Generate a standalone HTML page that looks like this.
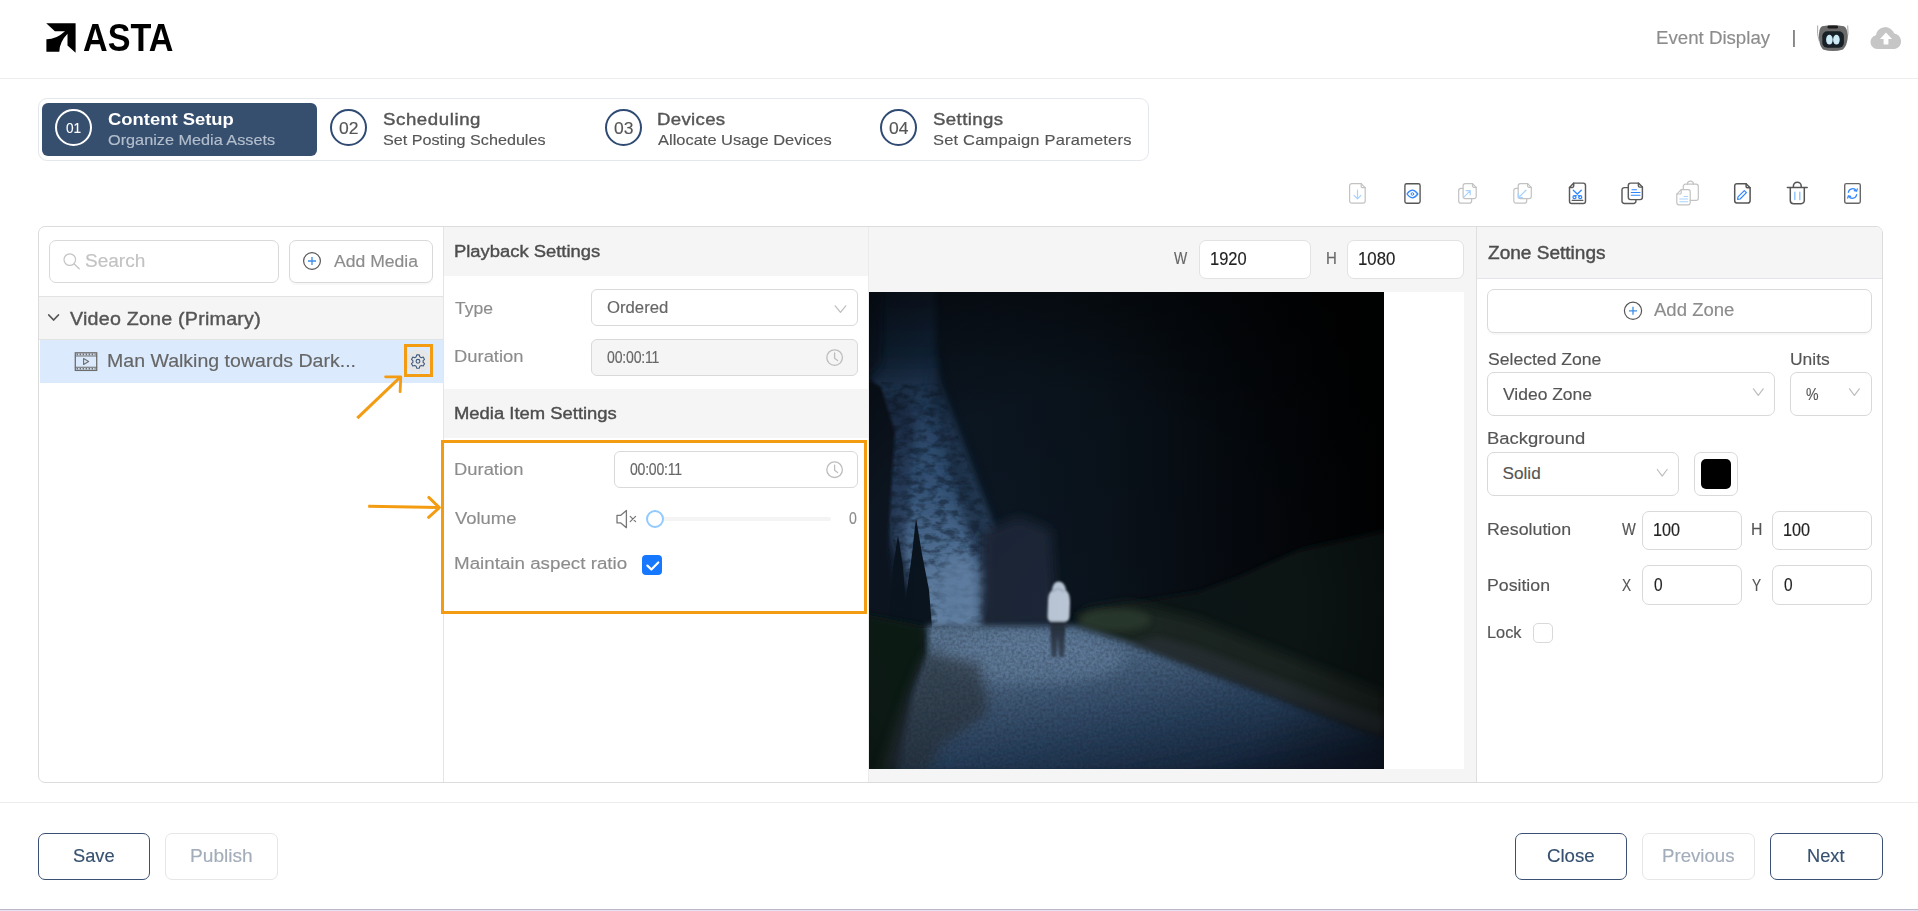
<!DOCTYPE html>
<html lang="en">
<head>
<meta charset="utf-8">
<title>ASTA - Content Setup</title>
<style>
*{box-sizing:border-box;margin:0;padding:0}
html,body{width:1918px;height:911px;overflow:hidden;background:#fff}
body{position:relative;font-family:"Liberation Sans",sans-serif;color:#555}
.a{position:absolute}
.t{position:absolute;white-space:nowrap;line-height:1;transform-origin:0 50%}
.box{position:absolute;border:1px solid #d9d9d9;border-radius:6px;background:#fff}
.hl{position:absolute;background:#ececec;height:1px}
.vl{position:absolute;background:#e4e4ec;width:1px}
svg{position:absolute;overflow:visible}
</style>
</head>
<body>
<!-- header -->
<div class="hl" style="left:0;top:78px;width:1918px;background:#ededed"></div>
<svg class="a" style="left:0;top:0" width="1918" height="100" viewBox="0 0 1918 100">
<path fill="#000" d="M46.2 23.3H75.6V52.7L67.5 45.5V33.8Q59.5 42 59.3 51.8H46.4V39.3Q56 39.5 65 31.2H54.9Z"/>
<!-- robot avatar -->
<g>
<path d="M1817.700 25.500Q1816.700 34 1819.200 41M1847.700 25.500Q1848.900 34 1846.600 41" stroke="#a8a8a8" stroke-width="1" fill="none"/>
<path d="M1822 26.200Q1833 24.200 1844 26.200Q1848 28 1847.500 38Q1847 46 1843 49.500Q1833 52.600 1823 49.500Q1819.500 46 1819 38Q1818.500 28 1822 26.200Z" fill="#6b6b6b"/>
<rect x="1827.500" y="25.600" width="10.500" height="3" rx="1.400" fill="#1c1c1c"/>
<rect x="1822.300" y="31.200" width="21.600" height="16.600" rx="5" fill="#172026"/>
<ellipse cx="1829.400" cy="39.700" rx="3.300" ry="4.900" fill="#cdeaf7"/>
<ellipse cx="1836.400" cy="39.700" rx="3.300" ry="4.900" fill="#cdeaf7"/>
</g>
<!-- cloud upload -->
<g fill="#c6c6c6">
<path d="M1877 49a7 7 0 0 1-1.2-13.8a9.5 9.5 0 0 1 18.4-1.6a7.8 7.8 0 0 1 0.6 15.4z"/>
</g>
<path d="M1886 32.5l6 6.5h-3.6v5.5h-4.8v-5.5h-3.6z" fill="#fff"/>
</svg>

<!-- stepper -->
<div class="a" style="left:38px;top:98px;width:1111px;height:63px;border:1px solid #e4e7ec;border-radius:9px"></div>
<div class="a" style="left:42px;top:103px;width:275px;height:53px;background:#374f6f;border-radius:6px"></div>
<div class="a" style="left:55px;top:109px;width:37px;height:37px;border:2px solid #fff;border-radius:50%"></div>
<div class="a" style="left:330px;top:109px;width:37px;height:37px;border:2px solid #2f4a73;border-radius:50%"></div>
<div class="a" style="left:605px;top:109px;width:37px;height:37px;border:2px solid #2f4a73;border-radius:50%"></div>
<div class="a" style="left:880px;top:109px;width:37px;height:37px;border:2px solid #2f4a73;border-radius:50%"></div>
<svg class="a" style="left:0;top:0" width="1918" height="230" viewBox="0 0 1918 230" fill="none" stroke-linecap="round" stroke-linejoin="round">
<!-- 1 download (disabled) -->
<g stroke="#c2c2c2" stroke-width="1.2">
<path d="M1351.8 183.6h9.4l4 4v13.4a2.2 2.2 0 0 1-2.2 2.2h-11.2a2.2 2.2 0 0 1-2.2-2.2v-15.2a2.2 2.2 0 0 1 2.2-2.2z"/>
<path d="M1361.2 183.6v2.8a1.2 1.2 0 0 0 1.2 1.2h2.8"/>
</g>
<path d="M1357.5 190.2v8.5M1354 195.4l3.5 3.4l3.4-3.4" stroke="#a9d3ff" stroke-width="1.2"/>
<!-- 2 preview -->
<rect x="1404.9" y="183.7" width="15.2" height="19.5" rx="1.8" stroke="#555" stroke-width="1.35"/>
<path d="M1407 194q5.3-7.6 10.8 0q-5.5 7.6-10.8 0z" stroke="#2f86ff" stroke-width="1.3"/>
<circle cx="1412.4" cy="194" r="1.3" stroke="#2f86ff" stroke-width="1"/>
<!-- 3 export (disabled) -->
<g stroke="#c2c2c2" stroke-width="1.2">
<path d="M1462.9 188.4h-2a2.2 2.2 0 0 0-2.2 2.2v10.4a2.2 2.2 0 0 0 2.2 2.2h8.5a2.2 2.2 0 0 0 2.200-2.2v-2.200"/>
<path d="M1465.300 183.600h7.200l3.700 3.700v9.200a2.200 2.200 0 0 1-2.200 2.200h-8.700a2.200 2.200 0 0 1-2.200-2.200v-10.700a2.200 2.200 0 0 1 2.200-2.200z"/>
<path d="M1472.500 183.600v2.500a1.200 1.200 0 0 0 1.200 1.200h2.500"/>
</g>
<path d="M1463.400 197.600l6.600-6.800M1466 190.600h4.200v4.200" stroke="#a9d3ff" stroke-width="1.200"/>
<!-- 4 import (disabled) -->
<g stroke="#c2c2c2" stroke-width="1.200">
<path d="M1518 188.400h-2a2.200 2.200 0 0 0-2.200 2.200v10.400a2.200 2.200 0 0 0 2.200 2.200h8.500a2.200 2.200 0 0 0 2.200-2.200v-2.200"/>
<path d="M1520.400 183.600h7.200l3.700 3.700v9.200a2.200 2.200 0 0 1-2.200 2.200h-8.700a2.200 2.200 0 0 1-2.200-2.200v-10.700a2.200 2.200 0 0 1 2.200-2.200z"/>
<path d="M1527.600 183.600v2.500a1.200 1.200 0 0 0 1.200 1.200h2.500"/>
</g>
<path d="M1526 190.200l-7.600 7.500M1518.300 193.500v4.200h4.200" stroke="#a9d3ff" stroke-width="1.200"/>
<!-- 5 cut -->
<g stroke="#5a5a5a" stroke-width="1.450">
<path d="M1573.700 183.100h9.500a2.300 2.300 0 0 1 2.300 2.300v15.800a2.300 2.300 0 0 1-2.300 2.300h-11.400a2.300 2.300 0 0 1-2.300-2.300v-13.800z"/>
<path d="M1573.700 183.100v3a1.300 1.300 0 0 1-1.300 1.300h-2.900"/>
<path d="M1572.200 200.400h10.600" stroke-width="1.300"/>
</g>
<g stroke="#2f86ff" stroke-width="1.300">
<path d="M1573.300 190.200l6.300 6M1581.300 190.200l-6.300 6"/>
<circle cx="1574.500" cy="197.200" r="1.500"/><circle cx="1580.200" cy="197.200" r="1.500"/>
</g>
<!-- 6 copy -->
<g stroke="#5a5a5a" stroke-width="1.450">
<path d="M1628.300 187.600h-4a2.300 2.300 0 0 0-2.300 2.300v11.300a2.300 2.300 0 0 0 2.300 2.300h9.300a2.300 2.300 0 0 0 2.300-2.300v-1.600"/>
<path d="M1630.600 183.100h7.800l4 4v10.200a2.300 2.300 0 0 1-2.300 2.300h-9.500a2.300 2.300 0 0 1-2.300-2.300v-11.900a2.300 2.300 0 0 1 2.300-2.300z"/>
<path d="M1638.400 183.100v2.700a1.300 1.300 0 0 0 1.300 1.300h2.700"/>
</g>
<path d="M1632 189.800h4.500M1631.200 192.500h8.800M1631.200 195.300h8.800" stroke="#2f86ff" stroke-width="1.100"/>
<!-- 7 paste (disabled) -->
<g stroke="#c2c2c2" stroke-width="1.200">
<path d="M1690.200 200.400h6a2.100 2.100 0 0 0 2.100-2.100v-12a2.100 2.100 0 0 0-2.100-2.100h-10.800a2.100 2.100 0 0 0-2.100 2.100v3.300"/>
<path d="M1687.400 184.200a3 3 0 0 1 6 0"/>
<path d="M1681.200 189.700h6.900a2.100 2.100 0 0 1 2.100 2.100v11a2.100 2.100 0 0 1-2.100 2.100h-9.200a2.100 2.100 0 0 1-2.100-2.100v-8.700z"/>
<path d="M1681.200 189.700v3a1.300 1.300 0 0 1-1.300 1.300h-3.100"/>
</g>
<path d="M1684 196.500h3.600M1679.800 199h7.800M1679.800 201.700h7.800" stroke="#a9d3ff" stroke-width="1.100"/>
<!-- 8 edit -->
<g stroke="#555" stroke-width="1.500">
<path d="M1736.900 183.700h9.200l4 4v13.100a2.200 2.200 0 0 1-2.200 2.200h-11a2.200 2.200 0 0 1-2.200-2.200v-14.900a2.200 2.200 0 0 1 2.200-2.200z"/>
<path d="M1746.100 183.700v2.800a1.200 1.200 0 0 0 1.200 1.200h2.800"/>
</g>
<path d="M1744.300 190.600l2.100 2.100l-6.300 6.300l-2.500.5l.4-2.600z" stroke="#2f86ff" stroke-width="1.200"/>
<!-- 9 delete -->
<g stroke="#555" stroke-width="1.500">
<path d="M1787.400 187.500h19.800"/>
<path d="M1793.400 187.300v-1.200a3.900 3.900 0 0 1 7.800 0v1.200"/>
<path d="M1790.300 187.700v12.800a3.200 3.200 0 0 0 3.200 3.200h7.600a3.200 3.200 0 0 0 3.200-3.200v-12.800"/>
</g>
<path d="M1794.800 192.200v7.400M1799.800 192.200v7.400" stroke="#8cc4ff" stroke-width="1.400"/>
<!-- 10 refresh -->
<rect x="1844.700" y="183.600" width="15.600" height="19.600" rx="1.600" stroke="#666" stroke-width="1.400"/>
<g stroke="#2f86ff" stroke-width="1.200">
<path d="M1848.300 192.300a4.400 4.400 0 0 1 8-1.600M1856.700 194.700a4.400 4.400 0 0 1-8 1.600"/>
<path d="M1857.300 188.800l-.6 2.400l-2.400-.5M1847.700 198.200l.6-2.400l2.400.5"/>
</g>
</svg>

<!-- main panel -->
<div class="a" style="left:38px;top:226px;width:1845px;height:557px;border:1px solid #dcdcdc;border-radius:7px;overflow:hidden;background:#fff">
  <!-- coordinates inside are page coords minus (39,227) -->
  <div class="a" style="left:405px;top:0;width:425px;height:49px;background:#f5f5f5"></div>
  <div class="a" style="left:405px;top:162px;width:425px;height:49px;background:#f5f5f5"></div>
  <div class="a" style="left:830px;top:0;width:607px;height:555px;background:#f5f5f5"></div>
  <div class="a" style="left:1438px;top:0;width:405px;height:51px;background:#f5f5f5"></div>
  <div class="a" style="left:0;top:69px;width:404px;height:44px;background:#f5f5f5;border-top:1px solid #e2e2e2;border-bottom:1px solid #e2e2e2"></div>
  <div class="a" style="left:1px;top:113px;width:403px;height:43px;background:#dbeafc"></div>
</div>
<div class="vl" style="left:443px;top:227px;height:555px"></div>
<div class="vl" style="left:868px;top:227px;height:555px;background:#ebebeb"></div>
<div class="vl" style="left:1476px;top:227px;height:555px;background:#dfdfdf"></div>
<div class="hl" style="left:1477px;top:278px;width:405px;background:#e4e4ec"></div>
<!-- left column controls -->
<div class="box" style="left:49px;top:240px;width:230px;height:43px;border-radius:7px"></div>
<div class="box" style="left:289px;top:240px;width:144px;height:43px;border-radius:7px;box-shadow:0 2px 1px rgba(0,0,0,.03)"></div>
<!-- middle controls -->
<div class="box" style="left:591px;top:289px;width:267px;height:37px"></div>
<div class="box" style="left:591px;top:339px;width:267px;height:37px;background:#f5f5f5"></div>
<div class="box" style="left:614px;top:451px;width:244px;height:37px"></div>
<div class="a" style="left:655px;top:517px;width:176px;height:4px;border-radius:2px;background:#f4f4f4"></div>
<div class="a" style="left:646px;top:510px;width:18px;height:18px;border-radius:50%;border:2.5px solid #91caff;background:#fff"></div>
<div class="a" style="left:642px;top:555px;width:20px;height:20px;border-radius:4px;background:#1677ff"></div>
<!-- orange highlight boxes -->
<div class="a" style="left:441px;top:440px;width:426px;height:174px;border:3px solid #f39c12"></div>
<div class="a" style="left:406px;top:349px;width:24px;height:24px;border-radius:12px;background:#e6e6e6"></div>
<div class="a" style="left:404px;top:344px;width:29px;height:33px;border:3px solid #f39c12"></div>
<!-- canvas -->
<div class="box" style="left:1199px;top:240px;width:112px;height:39px;border-color:#e2e2e2;border-radius:7px"></div>
<div class="box" style="left:1347px;top:240px;width:117px;height:39px;border-color:#e2e2e2;border-radius:7px"></div>
<div class="a" style="left:869px;top:292px;width:595px;height:477px;background:#fff"></div>
<svg class="a" style="left:869px;top:292px" width="515" height="477" viewBox="0 0 515 477">
<defs>
<filter id="b1" x="-20%" y="-20%" width="140%" height="140%"><feGaussianBlur stdDeviation="0.800"/></filter>
<filter id="b3" x="-20%" y="-20%" width="140%" height="140%"><feGaussianBlur stdDeviation="3"/></filter>
<filter id="b6" x="-20%" y="-20%" width="140%" height="140%"><feGaussianBlur stdDeviation="6"/></filter>
<filter id="b12" x="-30%" y="-30%" width="160%" height="160%"><feGaussianBlur stdDeviation="14"/></filter>
<filter id="noise" x="0" y="0" width="100%" height="100%">
<feTurbulence type="fractalNoise" baseFrequency="0.35" numOctaves="2" seed="7" result="n"/>
<feColorMatrix in="n" type="matrix" values="0 0 0 0 0  0 0 0 0 0  0 0 0 0 0  0 0 0 -1.600 1.050" result="a"/>
<feComposite in="SourceGraphic" in2="a" operator="in"/>
</filter>
<filter id="noise2" x="0" y="0" width="100%" height="100%">
<feTurbulence type="fractalNoise" baseFrequency="0.09 0.16" numOctaves="3" seed="3" result="n"/>
<feColorMatrix in="n" type="matrix" values="0 0 0 0 0  0 0 0 0 0  0 0 0 0 0  0 0 0 -3.200 1.900" result="a"/>
<feComposite in="SourceGraphic" in2="a" operator="in"/>
</filter>
<linearGradient id="gsky" x1="0" y1="0" x2="0" y2="1">
<stop offset="0" stop-color="#13253b"/><stop offset=".2" stop-color="#19314e"/><stop offset=".3" stop-color="#29466a"/><stop offset=".6" stop-color="#395a80"/><stop offset=".82" stop-color="#5a7aa0"/><stop offset="1" stop-color="#6c8bad"/>
</linearGradient>
<linearGradient id="groad" x1=".1" y1="0" x2=".75" y2="1">
<stop offset="0" stop-color="#627d9b"/><stop offset=".3" stop-color="#4f6986"/><stop offset=".65" stop-color="#2c4563"/><stop offset="1" stop-color="#14243c"/>
</linearGradient>
<radialGradient id="gvig" cx=".4" cy=".66" r=".8">
<stop offset="0" stop-color="#000" stop-opacity="0"/><stop offset=".55" stop-color="#000" stop-opacity=".1"/><stop offset="1" stop-color="#000" stop-opacity=".72"/>
</radialGradient>
<linearGradient id="gforest" x1="0" y1="0" x2="1" y2="0">
<stop offset="0" stop-color="#0f1c2b"/><stop offset=".45" stop-color="#0a131c"/><stop offset=".8" stop-color="#04070b"/><stop offset="1" stop-color="#010203"/>
</linearGradient>
<linearGradient id="glegs" x1="0" y1="0" x2="0" y2="1"><stop offset="0" stop-color="#232c38"/><stop offset="1" stop-color="#39475a"/></linearGradient>
<clipPath id="cimg"><rect width="515" height="477"/></clipPath>
</defs>
<g clip-path="url(#cimg)">
<rect width="515" height="477" fill="url(#gforest)"/>
<!-- distant street strip -->
<path d="M4 -5L66 -5L67 60L70 92L124 237L120 300L113 335L56 335L24 250L14 130L2 95Z" fill="url(#gsky)" filter="url(#b3)"/>
<path d="M66 55L70 92L126 237L124 300L102 250L86 200L74 150L62 100Z" fill="#14253a" opacity=".7" filter="url(#b6)"/>
<path d="M12 110L40 100L46 140L40 200L36 250L42 290L24 300Z" fill="#1a2c44" opacity=".55" filter="url(#b3)"/>
<g filter="url(#noise2)" opacity=".5"><path d="M12 90L70 92L124 237L120 300L113 335L56 335L24 250Z" fill="#0d1a2a"/></g>
<ellipse cx="90" cy="300" rx="26" ry="36" fill="#6383a8" opacity=".8" filter="url(#b6)"/>
<path d="M-5 -5H14L12 70L-5 90Z" fill="#0e1e32" filter="url(#b6)"/>
<!-- fog behind person -->
<path d="M113 240L150 225L182 238L188 333L113 335Z" fill="#1a2838" filter="url(#b6)"/>
<!-- left trees -->
<path d="M-5 85L12 95L26 140L22 200L18 255L26 300L34 332L-5 336Z" fill="#0b1622" filter="url(#b1)"/>
<path d="M29 243l5 32l4 55h-18l4-55z" fill="#0a1520"/>
<path d="M47 226l6 36l7 36l3 38h-30l5-38l5-36z" fill="#0a1520"/>
<!-- right bushes + verge -->
<path d="M205 320L330 300L370 285L430 258L520 238L520 440L380 390L210 338Z" fill="#0f1819" filter="url(#b3)"/>
<path d="M205 333L216 318L262 311L330 328L515 402L515 445L330 375L260 350Z" fill="#1b2822" filter="url(#b6)"/>
<ellipse cx="246" cy="328" rx="36" ry="11" fill="#2a3b2e" opacity=".85" filter="url(#b3)"/>
<!-- road -->
<path d="M57 334L206 334L262 351L330 376L520 447L520 480L28 480L44 400L56 362Z" fill="url(#groad)" filter="url(#b3)"/>
<ellipse cx="160" cy="368" rx="95" ry="24" fill="#7591b2" opacity=".4" filter="url(#b6)"/>
<!-- left grass -->
<path d="M-5 322L56 334L57 362L40 400L20 480L-5 480Z" fill="#101c17" filter="url(#b3)"/>
<!-- leaf litter -->
<path d="M57 360L110 372L120 420L70 455L60 480L10 480L40 400Z" fill="#2b3138" opacity=".6" filter="url(#b6)"/>
<path d="M262 351L330 376L515 446L515 425L470 410L330 356L290 345Z" fill="#2a3238" opacity=".75" filter="url(#b3)"/>
<g filter="url(#noise)" opacity=".35"><path d="M57 334L206 334L262 351L520 447L520 480L28 480L44 400Z" fill="#101a28"/></g>
<!-- person -->
<g filter="url(#b1)">
<path d="M181 329h15.500l-1.500 36h-5l-1.200-22l-1.300 22h-5z" fill="url(#glegs)"/>
<path d="M189.500 289.500c4.500 0 7 4 7.500 9c3 2 4 6 4 12l-.5 14c0 3-2 5-4 5h-14c-2.500 0-4-2-4-5l.5-14c0-6 1-10 4-12c.5-5 2.500-9 6.500-9z" fill="#bac6d5"/>
<path d="M184 300c2-4 8-4 11 0" stroke="#8d9db3" stroke-width="1.200" fill="none"/>
</g>
<rect width="515" height="477" fill="url(#gvig)"/>
</g>
</svg>

<!-- right column controls -->
<div class="box" style="left:1487px;top:289px;width:385px;height:44px;border-radius:7px;box-shadow:0 2px 1px rgba(0,0,0,.03)"></div>
<div class="box" style="left:1487px;top:372px;width:288px;height:44px;border-radius:7px"></div>
<div class="box" style="left:1790px;top:372px;width:82px;height:44px;border-radius:7px"></div>
<div class="box" style="left:1487px;top:452px;width:192px;height:44px;border-radius:7px"></div>
<div class="box" style="left:1694px;top:452px;width:44px;height:44px;border-radius:7px"></div>
<div class="a" style="left:1701px;top:459px;width:30px;height:30px;border-radius:5px;background:#000"></div>
<div class="box" style="left:1642px;top:511px;width:100px;height:39px;border-radius:7px"></div>
<div class="box" style="left:1772px;top:511px;width:100px;height:39px;border-radius:7px"></div>
<div class="box" style="left:1642px;top:565px;width:100px;height:40px;border-radius:7px"></div>
<div class="box" style="left:1772px;top:565px;width:100px;height:40px;border-radius:7px"></div>
<div class="box" style="left:1533px;top:623px;width:20px;height:20px;border-radius:5px"></div>
<!-- footer buttons -->
<div class="box" style="left:38px;top:833px;width:112px;height:47px;border:1.500px solid #3b5173;border-radius:7px"></div>
<div class="box" style="left:165px;top:833px;width:113px;height:47px;border-color:#e6e6e6;border-radius:7px"></div>
<div class="box" style="left:1515px;top:833px;width:112px;height:47px;border:1.500px solid #3b5173;border-radius:7px"></div>
<div class="box" style="left:1642px;top:833px;width:113px;height:47px;border-color:#e6e6e6;border-radius:7px"></div>
<div class="box" style="left:1770px;top:833px;width:113px;height:47px;border:1.500px solid #3b5173;border-radius:7px"></div>
<!-- panel icons -->
<svg class="a" style="left:0;top:0" width="1918" height="911" viewBox="0 0 1918 911" fill="none" stroke-linecap="round" stroke-linejoin="round">
<!-- search -->
<circle cx="69.800" cy="259.600" r="5.800" stroke="#c4c4c4" stroke-width="1.200"/>
<path d="M74.200 264l5 4.800" stroke="#c4c4c4" stroke-width="1.300"/>
<!-- add media plus -->
<circle cx="312" cy="261" r="8.400" stroke="#555" stroke-width="1.200"/>
<path d="M308 261h8M312 257v8" stroke="#3b8eea" stroke-width="1.300" stroke-linecap="butt"/>
<!-- chevron zone -->
<path d="M48.800 315l4.800 5l4.800-5" stroke="#555" stroke-width="1.800"/>
<!-- film icon -->
<g stroke="#6e6e6e" stroke-width="1.300" stroke-linejoin="miter">
<rect x="75.300" y="352.800" width="21.400" height="17.600" />
<path d="M75.300 356h21.400M75.300 367.200h21.400" stroke-width="1.100"/>
<path d="M76.600 354.400h19M76.600 368.800h19" stroke-width="1.600" stroke-dasharray="1.500 1.500" stroke-linecap="butt"/>
<path d="M83.600 358.600v5.800l5-2.900z" stroke-width="1.100" stroke-linejoin="round"/>
</g>
<!-- gear -->
<g stroke="#3d5a80" stroke-width="1.100">
<circle cx="418" cy="361.300" r="1.900"/>
<path d="M416.700 354.900h2.600l.5 1.900l1.500.9l1.900-.6l1.300 2.300l-1.400 1.300v1.700l1.400 1.300l-1.300 2.300l-1.900-.6l-1.500.9l-.5 1.900h-2.600l-.5-1.900l-1.500-.9l-1.900.6l-1.300-2.300l1.400-1.300v-1.700l-1.400-1.300l1.300-2.300l1.900.6l1.500-.9z"/>
</g>
<!-- orange arrows -->
<g stroke="#f39c12" stroke-width="3" stroke-linecap="butt">
<path d="M357.300 418.200L400.300 377.200"/><path d="M385.600 376.800l15.200.100l-.700 14.800" stroke-linecap="round" stroke-width="2.800"/>
<path d="M368.200 506.200l70.500 1.400"/><path d="M428.800 497.400l10.600 10.200l-10.800 9.800" stroke-linecap="round" stroke-width="2.900"/>
</g>
<!-- select chevrons -->
<g stroke="#bdbdbd" stroke-width="1.200">
<path d="M835.200 305.800l5.300 6.600l5.300-6.600"/>
<path d="M1753.400 388.800l4.900 6.600l4.900-6.600"/>
<path d="M1849.500 388.800l4.900 6.600l4.900-6.600"/>
<path d="M1657.300 469.500l4.900 6.600l4.900-6.600"/>
</g>
<!-- clocks -->
<g stroke="#bdbdbd" stroke-width="1.300">
<circle cx="834.600" cy="357.600" r="7.800"/><path d="M834.600 353v5.200l3 2.300"/>
<circle cx="834.600" cy="469.700" r="7.800"/><path d="M834.600 465.100v5.200l3 2.300"/>
</g>
<!-- speaker muted -->
<g stroke="#777" stroke-width="1.300">
<path d="M617 515.300h3.800l5.600-4.800v17.200l-5.600-4.800h-3.800z"/>
<path d="M630.200 516.300l5.400 5.400M635.600 516.300l-5.400 5.400" stroke-width="1.200"/>
</g>
<!-- checkbox tick -->
<path d="M647.400 565.600l4 3.900l6.900-7" stroke="#fff" stroke-width="2.200"/>
<!-- add zone plus -->
<circle cx="1633" cy="310.800" r="8.600" stroke="#555" stroke-width="1.200"/>
<path d="M1629 310.800h8M1633 306.800v8" stroke="#3b8eea" stroke-width="1.300" stroke-linecap="butt"/>
</svg>

<!-- footer -->
<div class="hl" style="left:0;top:802px;width:1918px;background:#ededed"></div>
<div class="a" style="left:0;top:909px;width:1918px;height:1px;background:#bcb8c8"></div><div class="a" style="left:0;top:910px;width:1918px;height:1px;background:#e6e0f5"></div>
<span class="t" style="left:83.25px;top:20.00px;font-size:37.9px;color:#000;font-weight:700;transform:scaleX(0.901);">ASTA</span>
<span class="t" style="left:1655.79px;top:30.00px;font-size:17.68px;color:#8c8c8c;-webkit-text-stroke:0.15px #8c8c8c;transform:scaleX(1.056);">Event Display</span>
<span class="t" style="left:1792.20px;top:29.00px;font-size:17.68px;color:#555;-webkit-text-stroke:0.15px #555;transform:scaleX(0.850);">|</span>
<span class="t" style="left:66.15px;top:120.00px;font-size:15.2px;color:#fff;-webkit-text-stroke:0.1px #fff;letter-spacing:-0.22px;transform:scaleX(0.900);">01</span>
<span class="t" style="left:107.95px;top:112.00px;font-size:16.95px;color:#fff;font-weight:700;transform:scaleX(1.087);">Content Setup</span>
<span class="t" style="left:107.95px;top:132.00px;font-size:14.98px;color:#b4bfcd;-webkit-text-stroke:0.15px #b4bfcd;transform:scaleX(1.086);">Organize Media Assets</span>
<span class="t" style="left:338.95px;top:120.50px;font-size:16.64px;color:#555;-webkit-text-stroke:0.15px #555;transform:scaleX(1.052);">02</span>
<span class="t" style="left:382.95px;top:112.00px;font-size:16.95px;color:#555;-webkit-text-stroke:0.4px #555;letter-spacing:0.53px;transform:scaleX(1.100);">Scheduling</span>
<span class="t" style="left:382.95px;top:132.00px;font-size:14.98px;color:#555;-webkit-text-stroke:0.15px #555;transform:scaleX(1.079);">Set Posting Schedules</span>
<span class="t" style="left:613.95px;top:120.50px;font-size:16.64px;color:#555;-webkit-text-stroke:0.15px #555;transform:scaleX(1.052);">03</span>
<span class="t" style="left:657.05px;top:112.00px;font-size:16.95px;color:#555;-webkit-text-stroke:0.4px #555;letter-spacing:0.28px;transform:scaleX(1.100);">Devices</span>
<span class="t" style="left:658.15px;top:132.00px;font-size:14.98px;color:#555;-webkit-text-stroke:0.15px #555;transform:scaleX(1.099);">Allocate Usage Devices</span>
<span class="t" style="left:888.95px;top:120.50px;font-size:16.64px;color:#555;-webkit-text-stroke:0.15px #555;transform:scaleX(1.052);">04</span>
<span class="t" style="left:932.75px;top:112.00px;font-size:16.95px;color:#555;-webkit-text-stroke:0.4px #555;letter-spacing:0.36px;transform:scaleX(1.100);">Settings</span>
<span class="t" style="left:932.75px;top:132.00px;font-size:14.98px;color:#555;-webkit-text-stroke:0.15px #555;letter-spacing:0.18px;transform:scaleX(1.100);">Set Campaign Parameters</span>
<span class="t" style="left:85.35px;top:252.80px;font-size:17.68px;color:#c2c2c2;-webkit-text-stroke:0.15px #c2c2c2;transform:scaleX(1.075);">Search</span>
<span class="t" style="left:333.85px;top:253.80px;font-size:16.64px;color:#8c8c8c;-webkit-text-stroke:0.15px #8c8c8c;transform:scaleX(1.057);">Add Media</span>
<span class="t" style="left:69.65px;top:311.00px;font-size:17.89px;color:#555;-webkit-text-stroke:0.4px #555;letter-spacing:0.20px;transform:scaleX(1.100);">Video Zone (Primary)</span>
<span class="t" style="left:106.66px;top:352.90px;font-size:17.89px;color:#666;-webkit-text-stroke:0.15px #666;transform:scaleX(1.093);">Man Walking towards Dark...</span>
<span class="t" style="left:453.78px;top:243.10px;font-size:17.26px;color:#4d4d4d;-webkit-text-stroke:0.4px #4d4d4d;transform:scaleX(1.066);">Playback Settings</span>
<span class="t" style="left:454.85px;top:300.00px;font-size:17.26px;color:#8c8c8c;-webkit-text-stroke:0.15px #8c8c8c;transform:scaleX(1.016);">Type</span>
<span class="t" style="left:606.95px;top:299.00px;font-size:16.02px;color:#666;-webkit-text-stroke:0.15px #666;transform:scaleX(1.044);">Ordered</span>
<span class="t" style="left:453.78px;top:348.20px;font-size:17.26px;color:#8c8c8c;-webkit-text-stroke:0.15px #8c8c8c;transform:scaleX(1.066);">Duration</span>
<span class="t" style="left:607.15px;top:350.10px;font-size:15.6px;color:#666;-webkit-text-stroke:0.15px #666;letter-spacing:-0.19px;transform:scaleX(0.900);">00:00:11</span>
<span class="t" style="left:453.78px;top:404.50px;font-size:17.26px;color:#4d4d4d;-webkit-text-stroke:0.4px #4d4d4d;transform:scaleX(1.068);">Media Item Settings</span>
<span class="t" style="left:453.78px;top:460.90px;font-size:17.26px;color:#8c8c8c;-webkit-text-stroke:0.15px #8c8c8c;transform:scaleX(1.066);">Duration</span>
<span class="t" style="left:629.75px;top:462.20px;font-size:15.6px;color:#666;-webkit-text-stroke:0.15px #666;letter-spacing:-0.24px;transform:scaleX(0.900);">00:00:11</span>
<span class="t" style="left:454.85px;top:510.20px;font-size:17.26px;color:#8c8c8c;-webkit-text-stroke:0.15px #8c8c8c;transform:scaleX(1.068);">Volume</span>
<span class="t" style="left:849.15px;top:511.00px;font-size:16.64px;color:#8c8c8c;-webkit-text-stroke:0.15px #8c8c8c;transform:scaleX(0.850);">0</span>
<span class="t" style="left:453.76px;top:554.60px;font-size:17.26px;color:#8c8c8c;-webkit-text-stroke:0.15px #8c8c8c;transform:scaleX(1.088);">Maintain aspect ratio</span>
<span class="t" style="left:1174.35px;top:249.60px;font-size:16.12px;color:#666;-webkit-text-stroke:0.15px #666;transform:scaleX(0.869);">W</span>
<span class="t" style="left:1210.13px;top:249.90px;font-size:17.99px;color:#222;-webkit-text-stroke:0.15px #222;transform:scaleX(0.915);">1920</span>
<span class="t" style="left:1325.92px;top:249.60px;font-size:16.12px;color:#666;-webkit-text-stroke:0.15px #666;transform:scaleX(0.930);">H</span>
<span class="t" style="left:1358.32px;top:249.90px;font-size:17.99px;color:#222;-webkit-text-stroke:0.15px #222;transform:scaleX(0.933);">1080</span>
<span class="t" style="left:1488.05px;top:245.00px;font-size:17.68px;color:#4d4d4d;-webkit-text-stroke:0.4px #4d4d4d;transform:scaleX(1.078);">Zone Settings</span>
<span class="t" style="left:1654.25px;top:301.70px;font-size:17.68px;color:#8c8c8c;-webkit-text-stroke:0.15px #8c8c8c;transform:scaleX(1.049);">Add Zone</span>
<span class="t" style="left:1488.05px;top:350.80px;font-size:17.16px;color:#555;-webkit-text-stroke:0.15px #555;transform:scaleX(1.025);">Selected Zone</span>
<span class="t" style="left:1790.43px;top:350.80px;font-size:17.16px;color:#555;-webkit-text-stroke:0.15px #555;transform:scaleX(1.018);">Units</span>
<span class="t" style="left:1502.95px;top:386.20px;font-size:17.16px;color:#555;-webkit-text-stroke:0.15px #555;transform:scaleX(1.018);">Video Zone</span>
<span class="t" style="left:1805.95px;top:387.20px;font-size:16.64px;color:#555;-webkit-text-stroke:0.15px #555;transform:scaleX(0.850);">%</span>
<span class="t" style="left:1486.78px;top:430.20px;font-size:17.16px;color:#555;-webkit-text-stroke:0.15px #555;transform:scaleX(1.074);">Background</span>
<span class="t" style="left:1502.55px;top:465.30px;font-size:17.16px;color:#555;-webkit-text-stroke:0.15px #555;">Solid</span>
<span class="t" style="left:1486.81px;top:521.20px;font-size:17.16px;color:#555;-webkit-text-stroke:0.15px #555;transform:scaleX(1.037);">Resolution</span>
<span class="t" style="left:1621.95px;top:521.20px;font-size:16.12px;color:#555;-webkit-text-stroke:0.15px #555;transform:scaleX(0.906);">W</span>
<span class="t" style="left:1652.65px;top:520.90px;font-size:17.99px;color:#222;-webkit-text-stroke:0.15px #222;transform:scaleX(0.900);">100</span>
<span class="t" style="left:1750.87px;top:521.20px;font-size:16.12px;color:#555;-webkit-text-stroke:0.15px #555;transform:scaleX(0.980);">H</span>
<span class="t" style="left:1782.55px;top:520.90px;font-size:17.99px;color:#222;-webkit-text-stroke:0.15px #222;transform:scaleX(0.903);">100</span>
<span class="t" style="left:1486.82px;top:576.50px;font-size:17.16px;color:#555;-webkit-text-stroke:0.15px #555;transform:scaleX(1.032);">Position</span>
<span class="t" style="left:1622.45px;top:576.50px;font-size:16.12px;color:#555;-webkit-text-stroke:0.15px #555;transform:scaleX(0.850);">X</span>
<span class="t" style="left:1654.15px;top:575.50px;font-size:17.99px;color:#222;-webkit-text-stroke:0.15px #222;transform:scaleX(0.860);">0</span>
<span class="t" style="left:1752.45px;top:576.50px;font-size:16.12px;color:#555;-webkit-text-stroke:0.15px #555;transform:scaleX(0.850);">Y</span>
<span class="t" style="left:1784.45px;top:575.50px;font-size:17.99px;color:#222;-webkit-text-stroke:0.15px #222;transform:scaleX(0.860);">0</span>
<span class="t" style="left:1486.90px;top:624.20px;font-size:17.16px;color:#555;-webkit-text-stroke:0.15px #555;transform:scaleX(0.953);">Lock</span>
<span class="t" style="left:73.15px;top:846.80px;font-size:17.99px;color:#36506f;-webkit-text-stroke:0.15px #36506f;transform:scaleX(1.015);">Save</span>
<span class="t" style="left:189.89px;top:846.80px;font-size:17.99px;color:#a3adba;-webkit-text-stroke:0.15px #a3adba;transform:scaleX(1.063);">Publish</span>
<span class="t" style="left:1547.35px;top:847.40px;font-size:17.99px;color:#36506f;-webkit-text-stroke:0.15px #36506f;transform:scaleX(1.037);">Close</span>
<span class="t" style="left:1661.91px;top:847.40px;font-size:17.99px;color:#a3adba;-webkit-text-stroke:0.15px #a3adba;transform:scaleX(1.037);">Previous</span>
<span class="t" style="left:1807.24px;top:847.40px;font-size:17.99px;color:#36506f;-webkit-text-stroke:0.15px #36506f;transform:scaleX(1.014);">Next</span>
</body>
</html>
